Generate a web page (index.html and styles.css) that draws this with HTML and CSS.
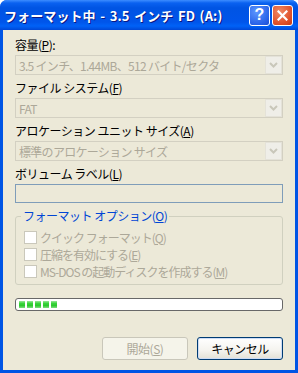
FILE: index.html
```html
<!DOCTYPE html>
<html lang="ja">
  <head>
    <meta charset="UTF-8" />
    <title>フォーマット中 - 3.5 インチ FD (A:)</title>
    <link rel="stylesheet" href="styles.css">
  </head>
  <body>
    <div class="window">
      <div class="titlebar">
        <span class="title">フォーマット中 - 3.5 インチ FD (A:)</span>
        <div class="tb-buttons">
          <span class="tb-btn help">?</span>
          <span class="tb-btn close">
            <svg width="11" height="11" viewBox="0 0 11 11">
              <path d="M1.5 1.5 L9.5 9.5 M9.5 1.5 L1.5 9.5" stroke="#fff" stroke-width="2.2" stroke-linecap="square" />
            </svg>
          </span>
        </div>
      </div>

      <div class="client">
        <div class="field">
          <div class="label">容量(<u>P</u>):</div>
          <div class="combo">
            <span class="combo-text">3.5 インチ、1.44MB、512 バイト/セクタ</span>
            <span class="arrow"><svg width="9" height="6" viewBox="0 0 9 6"><path d="M1 1 L4.5 4.5 L8 1" fill="none" stroke="#c9c7ba" stroke-width="2" /></svg></span>
          </div>
        </div>

        <div class="field">
          <div class="label">ファイル システム(<u>F</u>)</div>
          <div class="combo">
            <span class="combo-text">FAT</span>
            <span class="arrow"><svg width="9" height="6" viewBox="0 0 9 6"><path d="M1 1 L4.5 4.5 L8 1" fill="none" stroke="#c9c7ba" stroke-width="2" /></svg></span>
          </div>
        </div>

        <div class="field">
          <div class="label">アロケーション ユニット サイズ(<u>A</u>)</div>
          <div class="combo">
            <span class="combo-text">標準のアロケーション サイズ</span>
            <span class="arrow"><svg width="9" height="6" viewBox="0 0 9 6"><path d="M1 1 L4.5 4.5 L8 1" fill="none" stroke="#c9c7ba" stroke-width="2" /></svg></span>
          </div>
        </div>

        <div class="field">
          <div class="label">ボリューム ラベル(<u>L</u>)</div>
          <div class="textbox"></div>
        </div>

        <fieldset class="group">
          <legend>フォーマット オプション(<u>O</u>)</legend>
          <div class="check"><span class="box"></span>クイック フォーマット(<u>Q</u>)</div>
          <div class="check"><span class="box"></span>圧縮を有効にする(<u>E</u>)</div>
          <div class="check"><span class="box"></span>MS-DOS の起動ディスクを作成する(<u>M</u>)</div>
        </fieldset>

        <div class="progress">
          <span class="blk"></span>
          <span class="blk"></span>
          <span class="blk"></span>
          <span class="blk"></span>
          <span class="blk"></span>
        </div>

        <div class="buttons">
          <button class="btn" disabled>開始(<u>S</u>)</button>
          <button class="btn default">キャンセル</button>
        </div>
      </div>
    </div>
  </body>
</html>
```

FILE: styles.css
```css
body {
  margin: 0;
  background: #fff;
  font-family: "Noto Sans CJK JP", "Noto Sans", sans-serif;
  font-size: 12px;
}
.window {
  width: 298px;
  height: 373px;
  box-sizing: border-box;
  display: flex;
  flex-direction: column;
  background: #0055e5;
  border-radius: 7px 7px 0 0;
  overflow: hidden;
}
.titlebar {
  height: 30px;
  flex: none;
  display: flex;
  align-items: center;
  justify-content: space-between;
  padding: 0 5px 0 4px;
  background: linear-gradient(#3d8dff 0, #0a61f0 3px, #0054e3 8px, #0055ea 22px, #0062f7 26px, #0047d6 30px);
}
.title {
  color: #fff;
  font-weight: bold;
  font-size: 13px;
  letter-spacing: 0.1px;
  word-spacing: 1.5px;
  text-shadow: 1px 1px 0 #0a1883;
  white-space: nowrap;
}
.tb-buttons {
  display: flex;
  gap: 2px;
}
.tb-btn {
  width: 21px;
  height: 21px;
  box-sizing: border-box;
  border: 1px solid #fff;
  border-radius: 3px;
  display: flex;
  align-items: center;
  justify-content: center;
}
.help {
  background: radial-gradient(circle at 35% 30%, #5d97ff, #2a63e8 70%, #1d4fd0);
  color: #fff;
  font-family: "Liberation Sans", sans-serif;
  font-weight: bold;
  font-size: 16px;
}
.close {
  background: radial-gradient(circle at 35% 30%, #f08a66, #e0512a 65%, #c63a14);
}
.client {
  flex: 1;
  margin: 0 3px 3px 3px;
  background: #ece9d8;
  padding: 8px 12px 0 12px;
}
.field {
  margin-bottom: 6px;
}
.label {
  line-height: 14px;
  height: 14px;
  margin-bottom: 3px;
  color: #000;
  white-space: nowrap;
  letter-spacing: -0.5px;
}
.combo {
  height: 20px;
  box-sizing: border-box;
  border: 1px solid #d3d0c2;
  display: flex;
  align-items: center;
  justify-content: space-between;
  padding-left: 3px;
}
.combo-text {
  color: #aca899;
  white-space: nowrap;
  letter-spacing: -0.7px;
}
.arrow {
  width: 17px;
  height: 18px;
  box-sizing: border-box;
  border: 1px solid #e4e2d8;
  background: #efeee8;
  display: flex;
  align-items: center;
  justify-content: center;
}
.textbox {
  height: 19px;
  box-sizing: border-box;
  border: 1px solid #7f9db9;
}
.group {
  margin: 5px 0 0 0;
  padding: 6px 8px 4px 8px;
  border: 1px solid #d0d0bf;
  border-radius: 3px;
}
.group legend {
  color: #0046d5;
  line-height: 14px;
  padding: 0 2px;
  margin-left: -3px;
  letter-spacing: -0.5px;
}
.check {
  height: 17px;
  display: flex;
  align-items: center;
  color: #aca899;
  white-space: nowrap;
  letter-spacing: -1px;
}
.box {
  width: 13px;
  height: 13px;
  box-sizing: border-box;
  border: 1px solid #cac8bb;
  background: #fff;
  margin-right: 3px;
  flex: none;
}
.progress {
  margin-top: 13px;
  height: 13px;
  box-sizing: border-box;
  border: 1px solid #686868;
  border-radius: 3px;
  background: #fff;
  display: flex;
  align-items: center;
  gap: 2px;
  padding-left: 3px;
}
.blk {
  width: 6px;
  height: 7px;
  background: linear-gradient(#9be69a, #38d43a 35%, #2cc92e 65%, #7fdd7f);
}
.buttons {
  margin-top: 26px;
  display: flex;
  justify-content: flex-end;
  gap: 9px;
}
.btn {
  width: 86px;
  height: 23px;
  font-family: inherit;
  font-size: 12px;
  letter-spacing: -0.5px;
  border-radius: 3px;
  padding: 0;
}
.btn[disabled] {
  border: 1px solid #c9c7ba;
  background: #f5f4ea;
  color: #aca899;
}
.btn.default {
  border: 1px solid #003c74;
  background: linear-gradient(#ffffff, #f4f3ee 60%, #e3e1d6);
  color: #000;
  box-shadow: inset 0 0 0 1px #cddcf5;
}
```
